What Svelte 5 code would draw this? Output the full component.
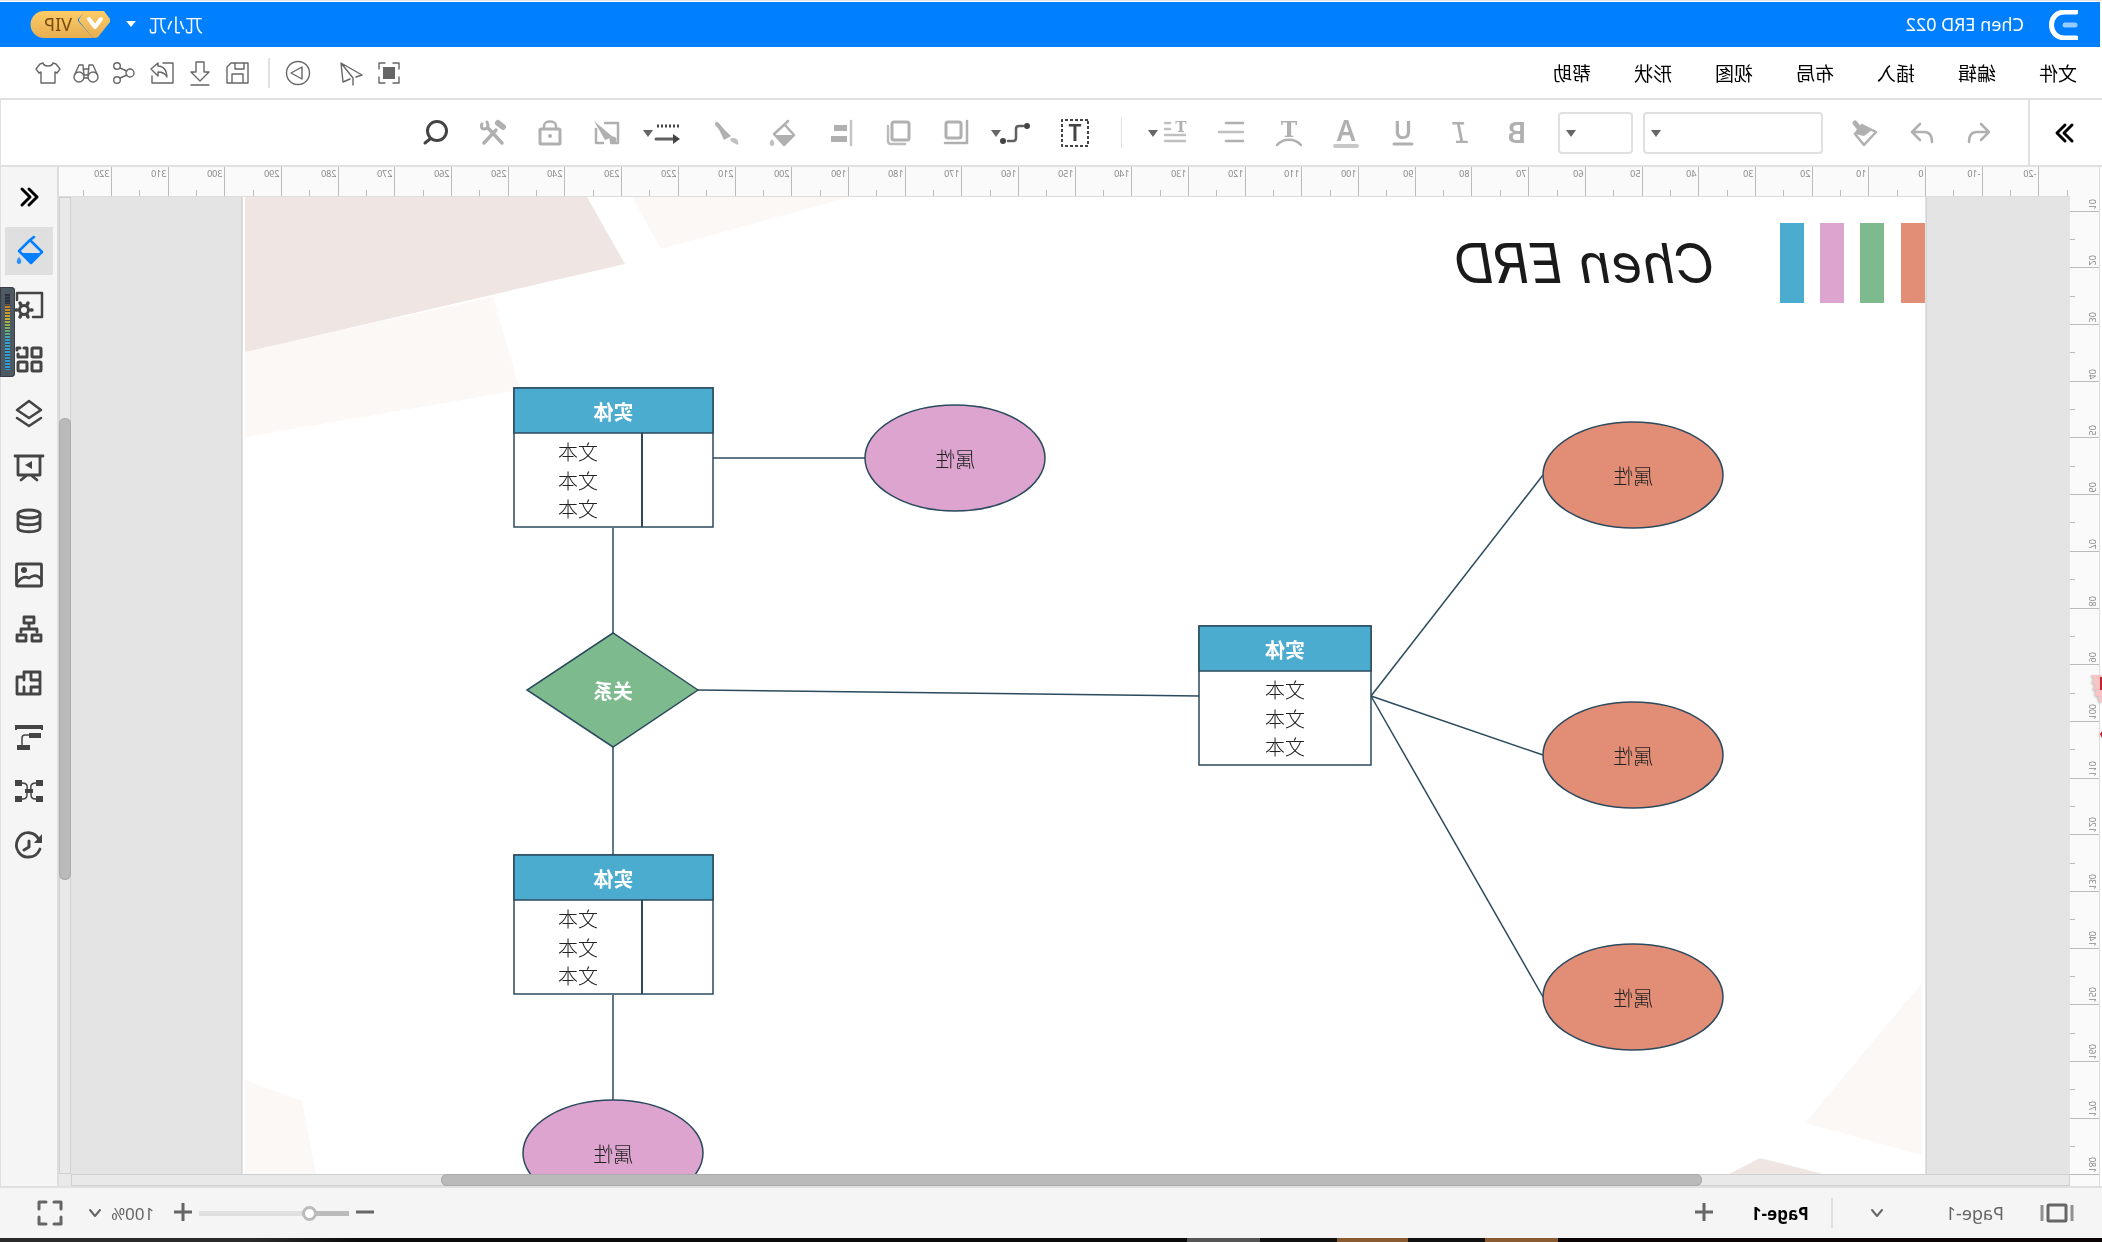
<script>
  // The whole workspace is shown flipped left to right; see .app in the styles.
  const menus = ['文件', '编辑', '插入', '布局', '视图', '形状', '帮助'];

  const historyTools = [
    { icon: 'undo', label: '撤销' },
    { icon: 'redo', label: '恢复' },
    { icon: 'painter', label: '格式刷' },
  ];
  const textTools = [
    { icon: 'bold', label: '加粗' },
    { icon: 'italic', label: '斜体' },
    { icon: 'underline', label: '下划线' },
    { icon: 'color', label: '字体颜色' },
    { icon: 'curve', label: '弧形文字' },
    { icon: 'align', label: '对齐' },
    { icon: 'spacing', label: '行距', caret: true },
  ];
  const shapeTools = [
    { icon: 'textbox', label: '文本框', dark: true },
    { icon: 'connector', label: '连接线', dark: true, caret: true, wide: true },
    { icon: 'front', label: '置于顶层' },
    { icon: 'copy', label: '组合' },
    { icon: 'arrange', label: '排列' },
    { icon: 'fill', label: '填充' },
    { icon: 'brush', label: '线条' },
    { icon: 'line', label: '线型', dark: true, caret: true, wide: true },
    { icon: 'effects', label: '样式' },
    { icon: 'lock', label: '锁定' },
    { icon: 'tools', label: '工具' },
    { icon: 'search', label: '查找', dark: true },
  ];
  const sideTools = [
    { icon: 'collapse', label: '收起' },
    { icon: 'bucket', label: '主题', active: true },
    { icon: 'pagesetup', label: '页面设置' },
    { icon: 'grid', label: '符号库' },
    { icon: 'layers', label: '图层' },
    { icon: 'present', label: '演示' },
    { icon: 'data', label: '数据' },
    { icon: 'image', label: '图片' },
    { icon: 'org', label: '组织结构' },
    { icon: 'floor', label: '平面图' },
    { icon: 'format', label: '格式' },
    { icon: 'mind', label: '思维导图' },
    { icon: 'history', label: '历史记录' },
  ];

  // Rulers: mm is one millimetre of the page in screen pixels; marks fill the visible length.
  const mm = 5.669;
  let winWidth = $state(1280);
  let winHeight = $state(800);
  const marks = (from, length, origin) => {
    const list = [];
    for (let t = from; t * mm + origin < length; t += 5) list.push(t);
    return list;
  };
  const hTicks = $derived(marks(-25, winWidth - 110, 144));
  const vTicks = $derived(marks(5, winHeight - 223, -13));

  const ink = '#2b4a5e';
  const bars = [
    { x: 1, fill: '#e28d76' },
    { x: 42, fill: '#7dba8d' },
    { x: 82, fill: '#dca4cf' },
    { x: 122, fill: '#4bacd0' },
  ];
  const attributes = [
    { x: 293, y: 321, fill: '#e28d76' },
    { x: 293, y: 601, fill: '#e28d76' },
    { x: 293, y: 843, fill: '#e28d76' },
    { x: 971, y: 304, fill: '#dca4cf' },
    { x: 1313, y: 999, fill: '#dca4cf' },
  ];
  const entities = [
    { x: 555, y: 472, w: 172, split: 0 },
    { x: 1213, y: 234, w: 199, split: 71 },
    { x: 1213, y: 701, w: 199, split: 71 },
  ];
  const links = [
    [555, 542, 383, 321],
    [555, 542, 383, 601],
    [555, 542, 383, 843],
    [727, 542, 1228, 536],
    [1061, 304, 1213, 304],
    [1313, 374, 1313, 479],
    [1313, 593, 1313, 701],
    [1313, 841, 1313, 946],
  ];

  let zoom = $state(24);
</script>

<svelte:window bind:innerWidth={winWidth} bind:innerHeight={winHeight} />

{#snippet icon(name)}
  <svg class="icon" viewBox="-16 -16 32 32" width="32" height="32" aria-hidden="true">
    {#if name === 'undo'}
      <path d="M-2 -9 -10 -1 -2 7M-10 -1H2C8 -1 10 3 10 9" stroke-width="2.5" />
    {:else if name === 'redo'}
      <path d="M2 -9 10 -1 2 7M10 -1H-2C-8 -1 -10 3 -10 9" stroke-width="2.5" />
    {:else if name === 'painter'}
      <path d="M10 -10 6 -5" stroke-width="5" />
      <path d="M3 -8 -11 -1 1 12 10 1Z" stroke-width="2.5" />
      <path class="solid" d="M3 -8 10 1 1 3 -7 -3Z" />
    {:else if name === 'bold'}
      <text y="10" font-size="29" font-weight="600">B</text>
    {:else if name === 'italic'}
      <text class="slab" y="10" font-size="29">I</text>
    {:else if name === 'underline'}
      <text y="6" font-size="25" font-weight="600">U</text>
      <path d="M-9 11H9" stroke-width="3" />
    {:else if name === 'color'}
      <text y="8" font-size="28" font-weight="600">A</text>
      <path d="M-11 13H11" stroke-width="4" opacity=".7" />
    {:else if name === 'curve'}
      <text class="serif" y="4" font-size="22" font-weight="700">T</text>
      <path d="M-12 12C-6 5 6 5 12 12" stroke-width="2.5" />
    {:else if name === 'align'}
      <path d="M-11 -10H6M-11 8H6" stroke-width="2.5" />
      <path d="M-11 -1H13" stroke-width="2.5" opacity=".8" />
    {:else if name === 'spacing'}
      <text class="serif" x="-6" y="-1" font-size="15" font-weight="700">T</text>
      <path d="M5 -10H10M5 -4H10M-10 2H10M-10 8H10" stroke-width="2.5" opacity=".8" />
    {:else if name === 'textbox'}
      <rect x="-13" y="-13" width="26" height="26" stroke-width="2" stroke-dasharray="3 2" stroke-linecap="butt" />
      <text y="8" font-size="23" font-weight="600">T</text>
    {:else if name === 'connector'}
      <path d="M-8 -7H-4C-2 -7 -1 -6 -1 -4V5C-1 7 0 8 2 8H7" stroke-width="2.5" opacity=".85" />
      <circle class="solid" cx="-12" cy="-7" r="3" />
      <circle class="solid" cx="12" cy="8" r="3" />
    {:else if name === 'front'}
      <path d="M-12 -12V10H10" stroke-width="2.5" />
      <rect x="-6" y="-11" width="15" height="16" rx="2" stroke-width="3" />
    {:else if name === 'copy'}
      <rect x="-11" y="-11" width="17" height="18" rx="2" stroke-width="3" />
      <path d="M10 -7V8C10 10 9 11 7 11H-7" stroke-width="2.5" opacity=".85" />
    {:else if name === 'arrange'}
      <path d="M-10 -12V12" stroke-width="2.5" opacity=".75" />
      <path class="solid" d="M-6 -8H7V-2H-6ZM-6 3H10V9H-6Z" />
    {:else if name === 'fill'}
      <path d="M-1 -8 -10 2 0 12 10 1 -1 -9 -4 -12" stroke-width="2.5" />
      <path class="solid" d="M-11 2H10L0 12Z" />
      <path class="solid" d="M12 6C15 9 15 13 12 13C9 13 9 9 12 6Z" opacity=".8" />
    {:else if name === 'brush'}
      <path class="solid" d="M12 -12 3 7 -4 3Z" />
      <path d="M10 -9 0 3" stroke-width="4" />
      <path class="solid" d="M-6 5C-1 5 -3 9 -11 12C-12 9 -11 5 -6 5Z" opacity=".8" />
    {:else if name === 'line'}
      <path d="M-12 -7H12" stroke-width="3" stroke-dasharray="2 2" stroke-linecap="butt" />
      <path d="M11 6H-7" stroke-width="3" opacity=".85" />
      <path class="solid" d="M-6 1V11L-13 6Z" />
    {:else if name === 'effects'}
      <path d="M2 -10H-11V10H-4M11 -4V10H4" stroke-width="2.5" />
      <path class="solid" d="M13 -12 2 7 -6 4Z" />
      <circle class="solid" cx="-6" cy="7" r="3.5" />
    {:else if name === 'lock'}
      <rect x="-10" y="-4" width="20" height="15" rx="1" stroke-width="3" />
      <path d="M-6 -4V-7C-6 -13 6 -13 6 -7V-4" stroke-width="2.5" />
      <circle class="solid" cx="0" cy="3" r="2" />
    {:else if name === 'tools'}
      <path d="M9 10 -3 -3M-9 10 5 -5" stroke-width="3.5" />
      <path d="M-10 -6 -5 -10" stroke-width="6" />
      <path d="M6 -11C4 -7 5 -4 9 -4C12 -4 12 -8 11 -9" stroke-width="3" />
    {:else if name === 'search'}
      <circle cx="-1" cy="-2" r="9.5" stroke-width="3" />
      <path d="M6 6 11 10" stroke-width="3" />
    {:else if name === 'expand'}
      <path d="M-7 -8 1 0 -7 8M0 -8 8 0 0 8" stroke-width="3" />
    {:else if name === 'collapse'}
      <path d="M7 -8 -1 0 7 8M0 -8 -8 0 0 8" stroke-width="3" />
    {:else if name === 'bucket'}
      <path d="M-1 -11 -13 1 -2 12 10 0 -1 -11 -5 -14" stroke-width="2.5" />
      <path class="solid" d="M-13 2H9L-2 13Z" />
      <path class="solid" d="M10 6C13 9 13 13 10 13C7 13 7 9 10 6Z" opacity=".8" />
    {:else if name === 'pagesetup'}
      <path d="M12 -5V-12H-13V12H-4" stroke-width="2.5" />
      <circle cx="5" cy="5" r="4.5" stroke-width="3" />
      <path d="M-3 5H-2M12 5H13M1 -2 2 0M8 10 9 12M9 -2 8 0M1 12 2 10" stroke-width="3.5" />
    {:else if name === 'grid'}
      <rect x="-12" y="-11" width="9" height="9" rx="1" stroke-width="3" />
      <rect x="-12" y="3" width="9" height="9" rx="1" stroke-width="3" />
      <rect x="2" y="3" width="9" height="9" rx="1" stroke-width="3" />
      <path d="M5 -11H2V-2H11V-5M9 -11H12V-9" stroke-width="3" />
    {:else if name === 'layers'}
      <path d="M0 -12 12 -3 0 5 -12 -3Z" stroke-width="2.5" />
      <path d="M-12 5 0 13 12 5" stroke-width="2.5" />
    {:else if name === 'present'}
      <path d="M-14 -11H14M-11 -11V8H11V-11M-3 9 -8 13M3 9 8 13" stroke-width="2.8" />
      <path class="solid" d="M-3 -6V2L4 -2Z" />
    {:else if name === 'data'}
      <ellipse cx="0" cy="-7" rx="11" ry="4" stroke-width="2.8" />
      <path d="M-11 -7V7C-11 12 11 12 11 7V-7M-11 0C-11 5 11 5 11 0" stroke-width="2.8" />
    {:else if name === 'image'}
      <rect x="-12.5" y="-11" width="25" height="22" rx="1" stroke-width="2.8" />
      <circle class="solid" cx="5" cy="-5" r="3" />
      <path d="M12 8C8 2 4 1 0 3C-4 0 -8 -1 -12 4" stroke-width="2.8" />
    {:else if name === 'org'}
      <path d="M-5 -12H5V-6H-5ZM-12 6H-3V12H-12ZM3 6H12V12H3ZM0 -6V0M-8 3V0H8V3" stroke-width="2.8" />
    {:else if name === 'floor'}
      <path d="M5 -3V-11H-11V11H12V-6H6M-2 -11V-3H-10M5 11V4M-2 11V4H-10" stroke-width="2.8" />
    {:else if name === 'format'}
      <path class="solid" d="M-14 -12H14V-7H12V-8H-12V-7H-14Z" />
      <path class="solid" d="M-12 -4H0V1H-12ZM-1 8H12V13H-1Z" />
      <path d="M0 -2H4C6 -2 7 -1 7 1V8" stroke-width="1.5" />
    {:else if name === 'mind'}
      <path class="solid" d="M-14 -11H-7V-5H-14ZM7 -11H14V-5H7ZM-14 5H-7V11H-14ZM7 5H14V11H7ZM-4 -2H4V2H-4Z" />
      <path d="M-7 -8C0 -8 -2 -3 -2 0C-2 4 -1 8 -7 8M7 -8C0 -8 2 -3 2 0C2 4 1 8 7 8" stroke-width="1.5" />
    {:else if name === 'history'}
      <path d="M-10 -5C-6 -14 6 -15 11 -6C16 4 8 13 0 12C-5 12 -9 9 -11 4" stroke-width="2.8" />
      <path class="solid" d="M-13 -11V-2H-5Z" />
      <path d="M0 -4V2L5 5" stroke-width="3" />
    {:else if name === 'shirt'}
      <path d="M-5 -10C-4 -6 4 -6 5 -10L8 -9 12 -4 9 0 7 -1V10H-7V-1L-9 0 -12 -4 -8 -9Z" />
    {:else if name === 'bino'}
      <circle cx="-7" cy="4" r="5" />
      <circle cx="7" cy="4" r="5" />
      <path d="M-11 1 -7 -8H-3L-2 2M11 1 7 -8H3L2 2M-3 -4H3M-2 2H2M-2 5H2" />
    {:else if name === 'share'}
      <circle cx="7" cy="-7" r="3.3" />
      <circle cx="7" cy="7" r="3.3" />
      <circle cx="-6" cy="0" r="4" />
      <path d="M4 -5 -3 -2M4 5 -3 2" />
    {:else if name === 'export'}
      <path d="M-1 -10H-11V10H10V3M11 -4 4 -10V-7C-2 -7 -5 -2 -5 4C-3 0 0 -1 4 -1V3Z" />
    {:else if name === 'download'}
      <path d="M-4 -11H4V-1H9L0 8 -9 -1H-4ZM-9 12H9" />
    {:else if name === 'save'}
      <path d="M-10 -10H7L11 -6V10H-10ZM-6 -10V-4H3V-10M-5 10V1H6V10" />
    {:else if name === 'play'}
      <circle r="11.5" />
      <path d="M-4 -6 7 0 -4 6Z" />
    {:else if name === 'send'}
      <path d="M10 -10 -11 2 -5 4M10 -10 -2 5V12M10 -10 8 9 1 6" />
    {:else if name === 'frame'}
      <path d="M-10 -4V-10H-4M4 -10H10V-4M10 4V10H4M-4 10H-10V4" />
      <path class="solid" d="M-6 -6H6V6H-6Z" />
    {:else if name === 'thumbs'}
      <rect x="-9" y="-8" width="18" height="16" rx="1" stroke-width="3" />
      <path d="M-15 -8V8M15 -8V8" stroke-width="3" stroke-linecap="butt" opacity=".7" />
    {:else if name === 'chevron'}
      <path d="M-5 -3 0 3 5 -3" stroke-width="2" />
    {:else if name === 'plus'}
      <path d="M-9 -1H9M0 -10V8" stroke-width="3" stroke-linecap="butt" />
    {:else if name === 'minus'}
      <path d="M-9 -1H9" stroke-width="3" stroke-linecap="butt" />
    {:else if name === 'fullscreen'}
      <path d="M-11 -4V-11H-4M4 -11H11V-4M11 4V11H4M-4 11H-11V4" stroke-width="3" />
    {/if}
  </svg>
{/snippet}

{#snippet tool(t)}
  <button class="tool" class:dark={t.dark} class:wide={t.wide} aria-label={t.label}>
    {@render icon(t.icon)}
    {#if t.caret}<span class="caret"></span>{/if}
  </button>
{/snippet}

<div class="app">
  <header class="titlebar">
    <svg class="logo" viewBox="0 0 30 30" width="30" height="30" aria-hidden="true">
      <path d="M2 2H13C31 2 31 28 13 28H2" fill="none" stroke="#fff" stroke-width="5" stroke-linecap="round" />
      <path d="M3 15H13" stroke="#99ccff" stroke-width="5" stroke-linecap="round" />
    </svg>
    <h1>Chen ERD 022</h1>
    <button class="user">兀小兀<span class="down"></span></button>
    <button class="vip" aria-label="VIP">
      <svg viewBox="0 0 80 28" width="80" height="28" aria-hidden="true">
        <defs>
          <linearGradient id="gold" x1="0" y1="0" x2="0" y2="1">
            <stop offset="0" stop-color="#ffcc66" />
            <stop offset="1" stop-color="#e5ae52" />
          </linearGradient>
        </defs>
        <path d="M24 0H66A13.500 13.500 0 0 1 66 27H17L32 10V8Z" fill="url(#gold)" />
        <path d="M6 0H25L31 8V10L18 26Q15 28 12 26L0 11V8Z" fill="url(#gold)" />
        <path d="M9 8 15 16 21 8" fill="none" stroke="#fff" stroke-width="4" stroke-linecap="round" stroke-linejoin="round" />
        <text x="38" y="20" font-size="18" fill="#7a4a10">VIP</text>
      </svg>
    </button>
  </header>

  <nav class="menubar">
    <div class="menus">
      {#each menus as m}<button>{m}</button>{/each}
    </div>
    <div class="actions">
      <button aria-label="框选">{@render icon('frame')}</button>
      <button aria-label="发送">{@render icon('send')}</button>
      <button class="play" aria-label="播放">{@render icon('play')}</button>
      <span class="rule"></span>
      <button aria-label="保存">{@render icon('save')}</button>
      <button aria-label="下载">{@render icon('download')}</button>
      <button aria-label="导出">{@render icon('export')}</button>
      <button aria-label="分享">{@render icon('share')}</button>
      <button aria-label="查找">{@render icon('bino')}</button>
      <button aria-label="主题">{@render icon('shirt')}</button>
    </div>
  </nav>

  <div class="toolbar">
    <button class="expand" aria-label="展开">{@render icon('expand')}</button>
    <div class="group first">
      {#each historyTools as t}{@render tool(t)}{/each}
    </div>
    <span class="pick font"><select aria-label="字体"><option></option></select></span>
    <span class="pick size"><select aria-label="字号"><option></option></select></span>
    <div class="group">
      {#each textTools as t}{@render tool(t)}{/each}
    </div>
    <span class="rule"></span>
    <div class="group">
      {#each shapeTools as t}{@render tool(t)}{/each}
    </div>
  </div>

  <main class="work">
    <svg class="vruler" aria-hidden="true">
      {#each vTicks as t}
        {@const y = Math.round(t * mm - 13) + 0.5}
        {#if t % 10 === 0}
          <path d="M0 {y}H30" />
          <text transform="translate(10 {y - 2}) rotate(-90)">{t}</text>
        {:else if y > 30}
          <path d="M24 {y}H30" />
        {/if}
      {/each}
    </svg>
    <section class="stage">
      <svg class="hruler" aria-hidden="true">
        {#each hTicks as t}
          {@const x = Math.round(t * mm + 144) + 0.5}
          {#if t % 10 === 0}
            <path d="M{x} 0V29" />
            <text x={x + 2} y="10">{t}</text>
          {:else}
            <path d="M{x} 23V29" />
          {/if}
        {/each}
      </svg>
      <div class="view">
        <svg class="canvas" role="img" aria-label="Chen ERD">
          <g transform="translate(144 -43)">
            <rect x="0" y="0" width="1684" height="1191" fill="#fff" stroke="#c4c4c4" />
            <path class="pale" d="M1294 43H1076L1265 95ZM1433 143 1406 236 1681 283V197ZM1681 926 1624 947 1608 1030H1681ZM4 829V1001L121 969Z" />
            <path class="dusty" d="M1681 43H1339L1301 110 1681 198ZM197 1020 166 1004 103 1020Z" />
            {#each bars as b}
              <rect x={b.x} y="69" width="24" height="80" fill={b.fill} />
            {/each}
            <text class="heading" x="211" y="129">Chen ERD</text>
            {#each links as [x1, y1, x2, y2]}
              <line {x1} {y1} {x2} {y2} stroke={ink} stroke-width="1.5" />
            {/each}
            {#each attributes as a}
              <ellipse cx={a.x} cy={a.y} rx="90" ry="53" fill={a.fill} stroke={ink} stroke-width="1.5" />
              <text class="label" x={a.x} y={a.y + 9}>属性</text>
            {/each}
            <path d="M1228 536 1313 479 1399 536 1313 593Z" fill="#7dba8d" stroke={ink} stroke-width="1.5" />
            <text class="label strong" x="1313" y="545">关系</text>
            {#each entities as e}
              <g transform="translate({e.x} {e.y})" stroke={ink} stroke-width="1.5">
                <rect width={e.w} height="139" fill="#fff" />
                <rect width={e.w} height="45" fill="#4bacd0" />
                {#if e.split}<path d="M{e.split} 45V139" stroke-width="2" />{/if}
                <text class="label strong" x={e.w / 2} y="32">实体</text>
                {#each [72, 101, 129] as y}
                  <text class="label" x={(e.w + e.split) / 2} {y}>文本</text>
                {/each}
              </g>
            {/each}
          </g>
        </svg>
        <div class="vscroll"><span></span></div>
        <div class="hscroll"><span></span></div>
      </div>
    </section>
    <aside class="side">
      {#each sideTools as t}
        <button class:active={t.active} class:black={t.icon === 'collapse'} aria-label={t.label}>{@render icon(t.icon)}</button>
      {/each}
    </aside>
    <div class="meter" aria-hidden="true"><span></span></div>
    <svg class="badge" width="16" height="80" viewBox="0 0 16 80" aria-hidden="true">
      <path d="M0 6H11L8 10 10 13 7 16 9 20 6 22 7 27 4 27 3 32 0 34Z" fill="#f9c3c6" />
      <path d="M0 8H2V21H0ZM0 62 2 65 0 69Z" fill="#c8202c" />
    </svg>
  </main>

  <footer class="status">
    <button class="thumbs" aria-label="缩略图">{@render icon('thumbs')}</button>
    <button class="pages">Page-1 {@render icon('chevron')}</button>
    <span class="rule"></span>
    <button class="tab">Page-1</button>
    <button class="add" aria-label="新建页面">{@render icon('plus')}</button>
    <div class="zoom">
      <button aria-label="缩小">{@render icon('minus')}</button>
      <input type="range" min="0" max="100" bind:value={zoom} aria-label="缩放" />
      <button aria-label="放大">{@render icon('plus')}</button>
      <button class="percent">100% {@render icon('chevron')}</button>
      <button class="full" aria-label="全屏">{@render icon('fullscreen')}</button>
    </div>
  </footer>
  <div class="dock"></div>
</div>

<style>
  :global(body) {
    margin: 0;
    overflow: hidden;
  }
  .app {
    box-sizing: border-box;
    display: flex;
    flex-direction: column;
    height: 100vh;
    padding-top: 2px;
    background: #fff;
    box-shadow: inset 0 1px #e6e6e6;
    color: #000;
    font-family: 'Noto Sans', 'Noto Sans CJK SC', sans-serif;
    transform: scaleX(-1);
  }
  button {
    display: flex;
    align-items: center;
    justify-content: center;
    padding: 0;
    border: 0;
    background: none;
    color: inherit;
    font: inherit;
    flex: none;
  }
  .icon {
    display: block;
    flex: none;
    overflow: visible;
    fill: none;
    stroke: currentColor;
    stroke-width: 1.4;
    stroke-linecap: round;
    stroke-linejoin: round;
  }
  .icon .solid {
    fill: currentColor;
    stroke: none;
  }
  .icon text {
    fill: currentColor;
    stroke: none;
    text-anchor: middle;
  }
  .icon .slab {
    font-family: 'DejaVu Sans Mono', monospace;
    font-style: italic;
  }
  .icon .serif {
    font-family: 'DejaVu Serif', serif;
  }
  .rule {
    width: 2px;
    height: 30px;
    background: #e0e0e0;
    flex: none;
  }

  .titlebar {
    display: flex;
    align-items: center;
    height: 45px;
    margin-left: 2px;
    padding: 0 30px 0 22px;
    background: #007fff;
    color: #fff;
    flex: none;
  }
  h1 {
    margin: 0 auto 0 24px;
    padding-bottom: 2px;
    font-size: 18px;
    font-weight: 400;
  }
  .user {
    gap: 13px;
    margin-right: 16px;
    padding-bottom: 2px;
    font-size: 18px;
  }
  .down {
    border: 5px solid transparent;
    border-top: 6px solid #fff;
    border-bottom: 0;
  }

  .menubar {
    display: flex;
    align-items: center;
    justify-content: space-between;
    height: 51px;
    padding: 0 29px 0 25px;
    border-bottom: 2px solid #e0e0e0;
    flex: none;
  }
  .menus {
    display: flex;
    gap: 43px;
    font-size: 19px;
  }
  .actions {
    display: flex;
    align-items: center;
    color: #666;
  }
  .actions button {
    width: 38px;
  }
  .actions .play {
    margin: 0 9px 0 15px;
  }
  .actions .rule {
    margin-right: 11px;
  }

  .toolbar {
    display: flex;
    align-items: center;
    height: 65px;
    padding-left: 2px;
    border-right: 1px solid #e0e0e0;
    border-bottom: 2px solid #e0e0e0;
    flex: none;
  }
  .expand {
    width: 72px;
    align-self: stretch;
    border-right: 2px solid #e0e0e0;
    box-sizing: border-box;
  }
  .group {
    display: flex;
    color: #b0b0b0;
  }
  .first {
    margin: 0 14px 0 20px;
  }
  .tool {
    position: relative;
    width: 57px;
    height: 44px;
  }
  .tool.wide {
    width: 63px;
  }
  .tool.dark {
    color: #444;
  }
  .caret,
  .pick::after {
    position: absolute;
    content: '';
    border: 5px solid transparent;
    border-top: 7px solid #666;
    border-bottom: 0;
  }
  .caret {
    top: 19px;
    left: 46px;
  }
  .pick {
    position: relative;
    height: 42px;
  }
  .pick::after {
    top: 18px;
    right: 8px;
    pointer-events: none;
  }
  .pick select {
    width: 100%;
    height: 100%;
    border: 2px solid #e0e0e0;
    border-radius: 4px;
    background: #fff;
    appearance: none;
  }
  .font {
    width: 180px;
    margin-right: 10px;
  }
  .size {
    width: 75px;
    margin-right: 12px;
  }
  .toolbar > .rule {
    width: 1px;
    margin: 0 17px 0 25px;
  }

  .work {
    position: relative;
    display: flex;
    flex: 1;
    min-height: 0;
    padding-left: 2px;
    border-right: 1px solid #e0e0e0;
    border-bottom: 2px solid #e0e0e0;
  }
  .vruler {
    width: 29px;
    height: 100%;
    border-left: 1px solid #ddd;
    background: #fafafa;
    flex: none;
  }
  .hruler {
    display: block;
    width: 100%;
    height: 29px;
    border-bottom: 1px solid #ddd;
    background: #fafafa;
    flex: none;
  }
  .vruler path,
  .hruler path {
    stroke: #bbb;
  }
  .vruler text,
  .hruler text {
    fill: #888;
    font-size: 9px;
  }
  .stage {
    display: flex;
    flex-direction: column;
    flex: 1;
    min-width: 0;
  }
  .view {
    display: grid;
    grid-template: minmax(0, 1fr) 12px / minmax(0, 1fr) 12px;
    flex: 1;
    min-height: 0;
    background: #e9e9e9;
  }
  .canvas {
    display: block;
    width: 100%;
    height: 100%;
    background: #e4e4e4;
  }
  .pale {
    fill: #fcf8f5;
  }
  .dusty {
    fill: #efe6e3;
  }
  .heading {
    fill: #1a1a1a;
    font-family: Inter, 'Noto Sans', sans-serif;
    font-size: 55px;
    font-style: italic;
  }
  .label {
    fill: #222;
    stroke: none;
    font-family: 'Noto Sans CJK SC', sans-serif;
    font-size: 20px;
    font-weight: 300;
    text-anchor: middle;
  }
  .strong {
    fill: #fff;
    font-weight: 700;
  }
  .vscroll,
  .hscroll {
    display: flex;
    box-shadow: inset 0 0 0 1px #d0d0d0;
  }
  .vscroll {
    flex-direction: column;
  }
  .vscroll span,
  .hscroll span {
    border-radius: 6px;
    background: #bababa;
    box-shadow: inset 0 0 0 1px #aaa;
  }
  .vscroll span {
    height: 47.3%;
    margin-top: 221px;
  }
  .hscroll span {
    width: 63.1%;
    margin-left: 18.4%;
  }

  .side {
    display: flex;
    flex-direction: column;
    align-items: center;
    gap: 6px;
    width: 56px;
    padding-top: 6px;
    border-left: 2px solid #ddd;
    background: #f5f5f5;
    color: #444;
    flex: none;
  }
  .side button {
    width: 48px;
    height: 48px;
  }
  .side .black {
    color: #000;
  }
  .side .active {
    background: #dfdfdf;
    color: #007fff;
  }
  .meter {
    position: absolute;
    top: 120px;
    right: -1px;
    display: flex;
    justify-content: center;
    width: 15px;
    height: 90px;
    border-radius: 4px 0 0 4px;
    background: #4d5a63;
    box-shadow: inset 0 0 0 1px #3a3d45;
  }
  .meter span {
    width: 5px;
    margin: 7px 0;
    background:
      repeating-linear-gradient(transparent 0 2px, #3c4650 2px 3px),
      linear-gradient(#2e2e3c 0 10px, #c8782c 11px, #c8b030 24px, #7fb060 34px, #3aa0c8 46px, #2f9ad8 77px);
  }
  .badge {
    position: absolute;
    top: 502px;
    left: 0;
    filter: drop-shadow(1px 1px 1px #bbb);
  }

  .status {
    display: flex;
    align-items: center;
    height: 50px;
    background: #f5f5f5;
    color: #666;
    font-size: 17px;
    flex: none;
  }
  .thumbs {
    margin: 0 37px 0 29px;
  }
  .pages {
    gap: 53px;
    font-size: 18px;
  }
  .status > .rule {
    margin: 0 22px 0 28px;
  }
  .tab {
    color: #000;
    font-weight: 700;
  }
  .add {
    margin-left: 32px;
  }
  .zoom {
    display: flex;
    align-items: center;
    margin-left: auto;
    padding-right: 34px;
  }
  .zoom input {
    width: 150px;
    height: 16px;
    margin: 0;
    background: linear-gradient(90deg, #bbb 26%, #e0e0e0 26%) center / 100% 5px no-repeat;
    appearance: none;
  }
  .zoom input::-webkit-slider-thumb {
    width: 15px;
    height: 15px;
    border: 3px solid #bbb;
    border-radius: 50%;
    background: #fff;
    box-sizing: border-box;
    appearance: none;
  }
  .percent {
    margin: 0 13px;
  }
  .dock {
    height: 4px;
    background: linear-gradient(90deg, #0b0405 544px, #8a5a30 544px 617px, #111 617px 694px, #8a5a30 694px 765px, #111 765px 842px, #555 842px 915px, #0a0a0a 915px 1740px, #2b2b2b 1850px);
    flex: none;
  }
</style>
